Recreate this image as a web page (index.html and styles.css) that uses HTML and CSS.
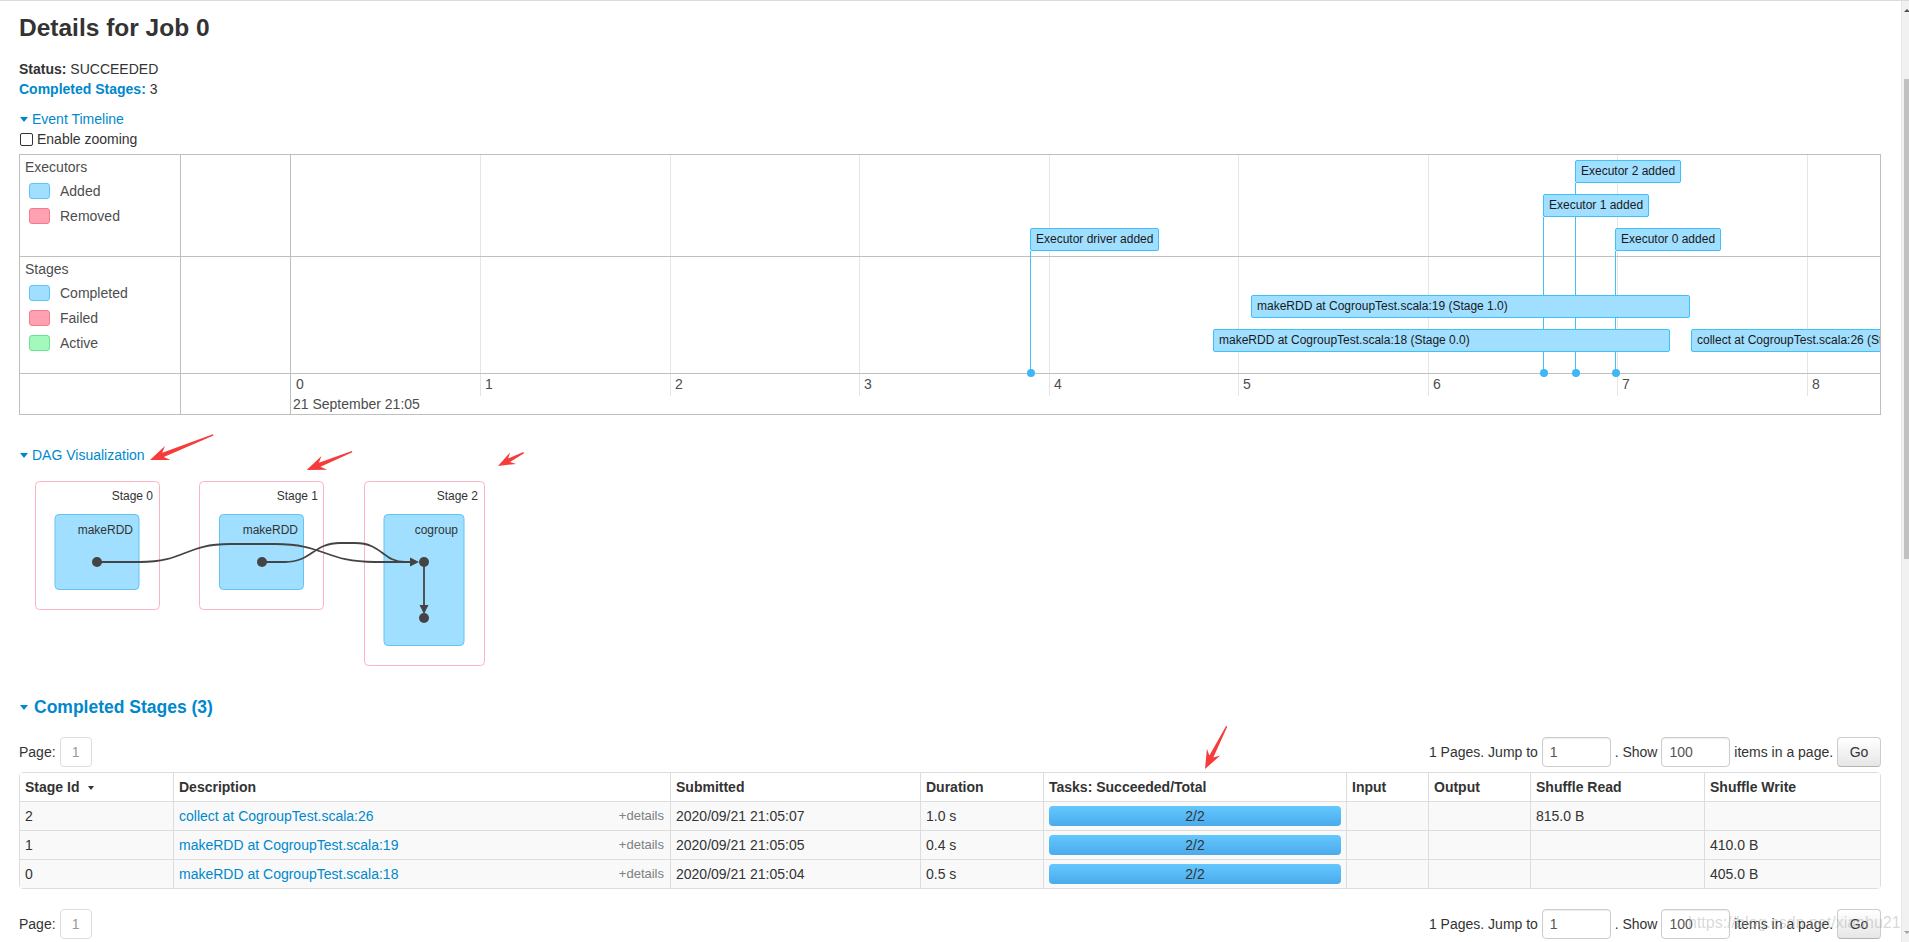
FILE: index.html
```html
<!DOCTYPE html>
<html lang="en">
<head>
<meta charset="utf-8">
<title>Details for Job 0</title>
<link rel="stylesheet" href="styles.css">
</head>
<body>
<div class="frame">
  <main class="page">
    <h3 class="title">Details for Job 0</h3>
    <ul class="summary">
      <li><strong>Status:</strong> SUCCEEDED</li>
      <li><a class="link strong">Completed Stages:</a> 3</li>
    </ul>
    <div class="toggle"><span class="caret"></span><a class="link">Event Timeline</a></div>
    <div class="zoom-opt"><span class="checkbox"></span>Enable zooming</div>

    <div class="timeline">
      <div class="tl-legend tl-c1 tl-r1">
        <div class="lg-title">Executors</div>
        <div class="lg-list">
          <div class="lg-item"><span class="sw sw-blue"></span>Added</div>
          <div class="lg-item"><span class="sw sw-red"></span>Removed</div>
        </div>
      </div>
      <div class="tl-c2 tl-r1"></div>
      <div class="tl-legend tl-c1 tl-r2">
        <div class="lg-title">Stages</div>
        <div class="lg-list">
          <div class="lg-item"><span class="sw sw-blue"></span>Completed</div>
          <div class="lg-item"><span class="sw sw-red"></span>Failed</div>
          <div class="lg-item"><span class="sw sw-green"></span>Active</div>
        </div>
      </div>
      <div class="tl-c2 tl-r2"></div>
      <div class="tl-c1 tl-r3"></div>
      <div class="tl-c2 tl-r3"></div>

      <div class="tl-canvas">
        <span class="tl-grid" style="left:189px"></span>
        <span class="tl-grid" style="left:379px"></span>
        <span class="tl-grid" style="left:568px"></span>
        <span class="tl-grid" style="left:758px"></span>
        <span class="tl-grid" style="left:947px"></span>
        <span class="tl-grid" style="left:1137px"></span>
        <span class="tl-grid" style="left:1326px"></span>
        <span class="tl-grid" style="left:1516px"></span>
        <span class="tl-hr tl-hr1"></span>
        <span class="tl-hr tl-hr2"></span>

        <span class="tl-tick" style="left:5px">0</span>
        <span class="tl-tick" style="left:194px">1</span>
        <span class="tl-tick" style="left:384px">2</span>
        <span class="tl-tick" style="left:573px">3</span>
        <span class="tl-tick" style="left:763px">4</span>
        <span class="tl-tick" style="left:952px">5</span>
        <span class="tl-tick" style="left:1142px">6</span>
        <span class="tl-tick" style="left:1331px">7</span>
        <span class="tl-tick" style="left:1521px">8</span>
        <span class="tl-date">21 September 21:05</span>

        <span class="tl-line" style="left:739px;top:96px;height:122px"></span>
        <span class="tl-line" style="left:1252px;top:62px;height:156px"></span>
        <span class="tl-line" style="left:1284px;top:28px;height:190px"></span>
        <span class="tl-line" style="left:1324px;top:96px;height:122px"></span>
        <span class="tl-dot" style="left:739px"></span>
        <span class="tl-dot" style="left:1252px"></span>
        <span class="tl-dot" style="left:1284px"></span>
        <span class="tl-dot" style="left:1324px"></span>

        <div class="tl-item" style="left:1284px;top:5px">Executor 2 added</div>
        <div class="tl-item" style="left:1252px;top:39px">Executor 1 added</div>
        <div class="tl-item" style="left:739px;top:73px">Executor driver added</div>
        <div class="tl-item" style="left:1324px;top:73px">Executor 0 added</div>
        <div class="tl-item" style="left:960px;top:140px;width:439px">makeRDD at CogroupTest.scala:19 (Stage 1.0)</div>
        <div class="tl-item" style="left:922px;top:174px;width:457px">makeRDD at CogroupTest.scala:18 (Stage 0.0)</div>
        <div class="tl-item" style="left:1400px;top:174px;width:320px">collect at CogroupTest.scala:26 (Stage 2.0)</div>
      </div>
    </div>

    <div class="toggle dag-toggle"><span class="caret"></span><a class="link">DAG Visualization</a></div>
    <svg class="dag" width="520" height="200" viewBox="19 470 520 200">
      <rect class="stage" x="35.5" y="481.5" width="124" height="128" rx="4"/>
      <rect class="stage" x="199.5" y="481.5" width="124" height="128" rx="4"/>
      <rect class="stage" x="364.5" y="481.5" width="120" height="184" rx="4"/>
      <text class="lbl" x="153" y="500" text-anchor="end">Stage 0</text>
      <text class="lbl" x="318" y="500" text-anchor="end">Stage 1</text>
      <text class="lbl" x="478" y="500" text-anchor="end">Stage 2</text>
      <rect class="node" x="55" y="514.5" width="84" height="75" rx="4"/>
      <rect class="node" x="219.5" y="514.5" width="84" height="75" rx="4"/>
      <rect class="node" x="384" y="514.5" width="80" height="131" rx="4"/>
      <text class="lbl" x="133" y="534" text-anchor="end">makeRDD</text>
      <text class="lbl" x="298" y="534" text-anchor="end">makeRDD</text>
      <text class="lbl" x="458" y="534" text-anchor="end">cogroup</text>
      <path class="edge" d="M97,562 L140,562 C185,562 185,544 230,544 L275,544 C325,544 325,562 375,562 L411,562"/>
      <path class="edge" d="M262,562 L285,562 C312,562 313,543 340,543 L355,543 C382,543 383,562 405,562 L411,562"/>
      <path class="edge" d="M424,562 L424,606"/>
      <polygon class="head" points="410,557.5 419,562 410,566.5"/>
      <polygon class="head" points="419.5,605 428.5,605 424,614"/>
      <circle class="dot" cx="97" cy="562" r="5"/>
      <circle class="dot" cx="262" cy="562" r="5"/>
      <circle class="dot" cx="424" cy="562" r="5"/>
      <circle class="dot" cx="424" cy="618" r="5"/>
    </svg>

    <h4 class="section"><span class="caret caret-lg"></span>Completed Stages (3)</h4>

    <div class="pager">
      <div class="pager-left">Page:<span class="page-box">1</span></div>
      <div class="pager-right">1 Pages. Jump to <span class="input">1</span> . Show <span class="input">100</span> items in a page. <span class="btn">Go</span></div>
    </div>

    <table class="stages">
      <colgroup>
        <col class="w1"><col class="w2"><col class="w3"><col class="w4"><col class="w5"><col class="w6"><col class="w7"><col class="w8"><col class="w9">
      </colgroup>
      <thead>
        <tr><th>Stage Id<span class="sort"></span></th><th>Description</th><th>Submitted</th><th>Duration</th><th>Tasks: Succeeded/Total</th><th>Input</th><th>Output</th><th>Shuffle Read</th><th>Shuffle Write</th></tr>
      </thead>
      <tbody>
        <tr><td>2</td><td><a class="link">collect at CogroupTest.scala:26</a><span class="details">+details</span></td><td>2020/09/21 21:05:07</td><td>1.0 s</td><td><div class="progress">2/2</div></td><td></td><td></td><td>815.0 B</td><td></td></tr>
        <tr><td>1</td><td><a class="link">makeRDD at CogroupTest.scala:19</a><span class="details">+details</span></td><td>2020/09/21 21:05:05</td><td>0.4 s</td><td><div class="progress">2/2</div></td><td></td><td></td><td></td><td>410.0 B</td></tr>
        <tr><td>0</td><td><a class="link">makeRDD at CogroupTest.scala:18</a><span class="details">+details</span></td><td>2020/09/21 21:05:04</td><td>0.5 s</td><td><div class="progress">2/2</div></td><td></td><td></td><td></td><td>405.0 B</td></tr>
      </tbody>
    </table>

    <div class="pager pager-bottom">
      <div class="pager-left">Page:<span class="page-box">1</span></div>
      <div class="pager-right">1 Pages. Jump to <span class="input">1</span> . Show <span class="input">100</span> items in a page. <span class="btn">Go</span></div>
    </div>
  </main>

  <div class="scrollbar"><span class="scroll-up"></span><span class="scroll-thumb"></span><span class="scroll-down"></span></div>

  <svg class="annot" width="1909" height="942" viewBox="0 0 1909 942">
    <g transform="translate(150 460) rotate(158.4)"><polygon points="0,0 -19,-7.5 -14,-2.2 -68,-0.7 -68,0.7 -14,2.2 -19,7.5"/></g>
    <g transform="translate(306.7 470) rotate(157.9)"><polygon points="0,0 -19,-7.5 -14,-2.2 -49,-0.7 -49,0.7 -14,2.2 -19,7.5"/></g>
    <g transform="translate(498 466) rotate(152.5)"><polygon points="0,0 -17,-6.5 -12.5,-2 -29,-0.7 -29,0.7 -12.5,2 -17,6.5"/></g>
    <g transform="translate(1205 769) rotate(116.9)"><polygon points="0,0 -19,-7.5 -14,-2.2 -48,-0.7 -48,0.7 -14,2.2 -19,7.5"/></g>
  </svg>
  <div class="watermark">https://blog.csdn.net/xiaohu21</div>
</div>
</body>
</html>
```
FILE: styles.css
```css
* { box-sizing: border-box; }

html, body {
  margin: 0;
  padding: 0;
  overflow: hidden;
  background: #fff;
}

body {
  font-family: "Liberation Sans", Arial, Helvetica, sans-serif;
  font-size: 14px;
  line-height: 20px;
  color: #333;
}

.frame {
  position: relative;
  display: flex;
  width: 1909px;
  height: 942px;
  border-top: 1px solid #dcdcdc;
  overflow: hidden;
}

.page {
  flex: 1 1 auto;
  min-width: 0;
  padding: 0 20px 0 19px;
}

/* header */
.title {
  margin: 12px 0 16px;
  font-size: 24.5px;
  line-height: 30px;
  font-weight: bold;
  color: #333;
}

.summary {
  list-style: none;
  margin: 0 0 10px;
  padding: 0;
}

.link {
  color: #0088cc;
  text-decoration: none;
}

.strong { font-weight: bold; }

.toggle {
  display: flex;
  align-items: center;
  height: 20px;
}

.caret {
  width: 0;
  height: 0;
  border-left: 4.5px solid transparent;
  border-right: 4.5px solid transparent;
  border-top: 5px solid #0088cc;
  margin: 0 4px 0 1px;
}

.zoom-opt {
  display: flex;
  align-items: center;
  height: 20px;
}

.checkbox {
  width: 13px;
  height: 13px;
  border: 1px solid #333;
  border-radius: 2px;
  background: #fff;
  margin: 1px 4px 0 1px;
}

/* timeline */
.timeline {
  margin-top: 5px;
  display: grid;
  grid-template-columns: 161px 110px 1fr;
  grid-template-rows: 102px 117px 40px;
  border: 1px solid #bfbfbf;
  color: #4d4d4d;
}

.tl-c1 { grid-column: 1; border-right: 1px solid #bfbfbf; }
.tl-c2 { grid-column: 2; border-right: 1px solid #bfbfbf; }
.tl-r1 { grid-row: 1; border-bottom: 1px solid #bfbfbf; }
.tl-r2 { grid-row: 2; border-bottom: 1px solid #bfbfbf; }
.tl-r3 { grid-row: 3; }

.tl-legend { padding: 3px 0 0 5px; }

.lg-title { line-height: 18px; }

.lg-list { margin-top: 2.5px; }

.lg-item {
  display: flex;
  align-items: center;
  height: 25px;
}

.sw {
  width: 21px;
  height: 16px;
  border: 1px solid;
  border-radius: 3px;
  margin: 0 10px 0 4px;
}

.sw-blue { background: #a0dfff; border-color: #5cc6fa; }
.sw-red { background: #ffa1b0; border-color: #f7798e; }
.sw-green { background: #a3f8bc; border-color: #6ae28e; }

.tl-canvas {
  grid-column: 3;
  grid-row: 1 / 4;
  position: relative;
  overflow: hidden;
}

.tl-grid {
  position: absolute;
  top: 0;
  width: 1px;
  height: 241px;
  background: #e5e5e5;
}

.tl-hr {
  position: absolute;
  left: 0;
  right: 0;
  height: 1px;
  background: #bfbfbf;
}
.tl-hr1 { top: 101px; }
.tl-hr2 { top: 218px; }

.tl-tick {
  position: absolute;
  top: 220px;
  line-height: 18px;
  color: #4d4d4d;
}

.tl-date {
  position: absolute;
  top: 240px;
  left: 2px;
  line-height: 18px;
  color: #4d4d4d;
  white-space: nowrap;
}

.tl-line {
  position: absolute;
  width: 1px;
  background: #3ec0ff;
}

.tl-dot {
  position: absolute;
  top: 214px;
  width: 8px;
  height: 8px;
  margin-left: -3.5px;
  border-radius: 50%;
  background: #3eb8f5;
}

.tl-item {
  position: absolute;
  height: 23px;
  padding: 0 5px;
  border: 1px solid #3ec0ff;
  border-radius: 2px;
  background: #a0dfff;
  font-size: 12px;
  line-height: 21px;
  color: #1a1a1a;
  white-space: nowrap;
  overflow: hidden;
}

/* DAG */
.dag-toggle { margin-top: 30px; }

.dag {
  display: block;
  margin-top: 5px;
  overflow: visible;
}

.dag .stage { fill: #fff; stroke: #ffb3c1; stroke-width: 1; }
.dag .node { fill: #a0dfff; stroke: #62c4f4; stroke-width: 1; }
.dag .lbl {
  font-family: "Liberation Sans", Arial, sans-serif;
  font-size: 12px;
  fill: #333;
}
.dag .edge { fill: none; stroke: #444; stroke-width: 1.8; }
.dag .head, .dag .dot { fill: #444; }

/* completed stages */
.section {
  margin: 25px 0 0;
  display: flex;
  align-items: center;
  font-size: 17.5px;
  line-height: 24px;
  font-weight: bold;
  color: #0088cc;
}

.caret-lg {
  border-left-width: 4px;
  border-right-width: 4px;
  border-top-width: 5px;
  margin: 0 6px 0 1px;
}

.pager {
  margin-top: 18px;
  display: flex;
  justify-content: space-between;
  align-items: center;
  height: 30px;
}

.pager-bottom { margin-top: 20px; }

.pager-left {
  display: flex;
  align-items: center;
}

.page-box {
  margin-left: 4px;
  width: 32px;
  height: 30px;
  border: 1px solid #ddd;
  border-radius: 4px;
  color: #999;
  display: flex;
  align-items: center;
  justify-content: center;
}

.pager-right {
  line-height: 30px;
  white-space: nowrap;
}

.input {
  display: inline-block;
  vertical-align: top;
  width: 69px;
  height: 30px;
  padding-left: 7px;
  border: 1px solid #ccc;
  border-radius: 4px;
  box-shadow: inset 0 1px 1px rgba(0, 0, 0, 0.075);
  color: #555;
  line-height: 28px;
}

.btn {
  display: inline-block;
  vertical-align: top;
  width: 44px;
  height: 30px;
  border: 1px solid #ccc;
  border-bottom-color: #b3b3b3;
  border-radius: 4px;
  background: linear-gradient(#ffffff, #e6e6e6);
  text-align: center;
  line-height: 28px;
  color: #333;
}

.stages {
  margin-top: 5px;
  width: 100%;
  table-layout: fixed;
  border-collapse: separate;
  border-spacing: 0;
  border: 1px solid #ddd;
  border-radius: 4px;
}

.w1 { width: 153px; }
.w2 { width: 497px; }
.w3 { width: 250px; }
.w4 { width: 123px; }
.w5 { width: 303px; }
.w6 { width: 82px; }
.w7 { width: 102px; }
.w8 { width: 174px; }
.w9 { width: 176px; }

.stages th,
.stages td {
  height: 29px;
  padding: 0 5px;
  border-top: 1px solid #ddd;
  border-left: 1px solid #ddd;
  text-align: left;
  vertical-align: middle;
  line-height: 20px;
  white-space: nowrap;
}

.stages th {
  height: 28px;
  border-top: none;
  font-weight: bold;
  color: #333;
  background: #fff;
}

.stages th:first-child,
.stages td:first-child { border-left: none; }

.stages tbody td { background: #f9f9f9; }

.sort {
  display: inline-block;
  width: 0;
  height: 0;
  border-left: 3.5px solid transparent;
  border-right: 3.5px solid transparent;
  border-top: 4px solid #333;
  margin-left: 9px;
  vertical-align: middle;
}

.details {
  float: right;
  font-size: 13px;
  color: #808080;
  margin-right: 1px;
}

.progress {
  height: 20px;
  border-radius: 4px;
  background: linear-gradient(#64c8ff, #4aaaeb);
  text-align: center;
  line-height: 20px;
  color: #333;
}

/* scrollbar */
.scrollbar {
  flex: 0 0 8px;
  position: relative;
  background: #f1f1f1;
  border-left: 1px solid #e6e6e6;
}

.scroll-up {
  position: absolute;
  top: 8px;
  left: 2px;
  width: 0;
  height: 0;
  border-left: 3px solid transparent;
  border-right: 3px solid transparent;
  border-bottom: 3px solid #505050;
}

.scroll-down {
  position: absolute;
  bottom: 8px;
  left: 2px;
  width: 0;
  height: 0;
  border-left: 3px solid transparent;
  border-right: 3px solid transparent;
  border-top: 3px solid #a3a3a3;
}

.scroll-thumb {
  position: absolute;
  top: 78px;
  left: 2px;
  right: 0;
  height: 480px;
  background: #c1c1c1;
}

/* overlays */
.annot {
  position: absolute;
  left: 0;
  top: -1px;
  pointer-events: none;
}

.annot polygon { fill: #f53b3b; }

.watermark {
  position: absolute;
  left: 1688px;
  top: 912px;
  font-size: 16px;
  line-height: 20px;
  color: rgba(170, 170, 170, 0.45);
  pointer-events: none;
  white-space: nowrap;
}
```
